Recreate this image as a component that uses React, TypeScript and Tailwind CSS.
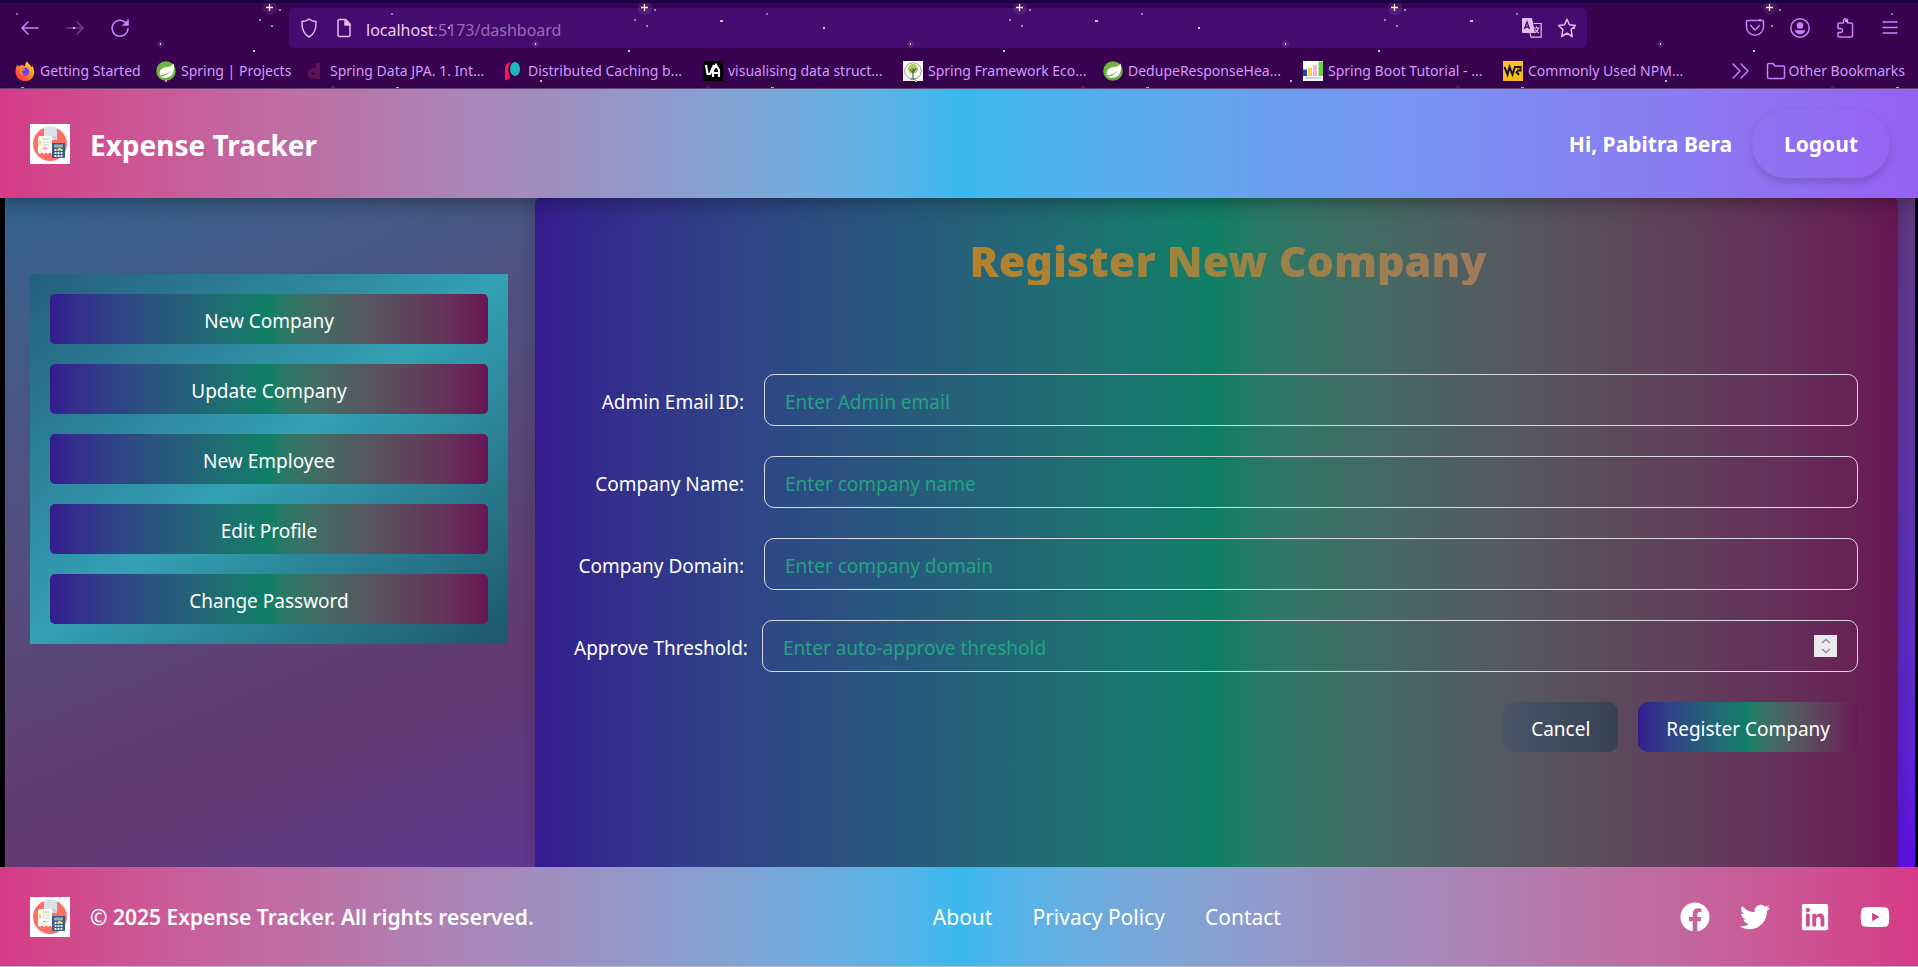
import React from "react";
import { FaFacebook, FaLinkedin, FaTwitter, FaYoutube } from "react-icons/fa";

const JEWEL =
  "bg-linear-to-r from-[#351b90] via-[#0f7f66] to-[#681555]";

function Stars() {
  return (
    <svg className="pointer-events-none absolute inset-0 z-10 h-full w-full" aria-hidden="true">
      <defs>
        <pattern id="stars" y="-3" width="375" height="90" patternUnits="userSpaceOnUse">
          <g fill="#d9b6c4">
            <rect x="16" y="13" width="2" height="2" opacity=".6" />
            <rect x="259" y="19" width="2" height="2" opacity=".7" />
            <rect x="279" y="9" width="2" height="2" opacity=".7" />
            <rect x="271" y="25" width="2" height="2" opacity=".7" />
            <rect x="253" y="50" width="2" height="2" />
            <rect x="73" y="27" width="2" height="2" />
            <rect x="345" y="20" width="3" height="2" />
            <rect x="165" y="80" width="2" height="2" />
            <rect x="21" y="87" width="3" height="2" />
            <rect x="160" y="43" width="1" height="2" />
          </g>
          <circle cx="270" cy="8" r="7" fill="#fff" opacity=".08" />
          <path d="M269.500 4v7M266 7.500h7" stroke="#ffe9c9" strokeWidth="1.300" />
          <path d="M160.500 40l4 4-4 4-4-4z" fill="#fff" opacity=".12" />
          <path d="M333 85l4 4h-8z" fill="#fff" opacity=".12" />
        </pattern>
      </defs>
      <rect width="100%" height="100%" fill="url(#stars)" />
    </svg>
  );
}

function Glyph({ children, className = "text-[#cf80ff]" }: { children: React.ReactNode; className?: string }) {
  return (
    <svg
      viewBox="0 0 20 20"
      className={`size-5 shrink-0 ${className}`}
      fill="none"
      stroke="currentColor"
      strokeWidth="1.5"
      strokeLinecap="round"
      strokeLinejoin="round"
      aria-hidden="true"
    >
      {children}
    </svg>
  );
}

function SpringLeaf() {
  return (
    <svg viewBox="0 0 20 20" className="size-5 shrink-0" aria-hidden="true">
      <circle cx="10" cy="10" r="9.800" fill="#6db33f" />
      <path d="M17.500 2.500c1.500 5 .5 12.500-6 14-3 .7-6 0-7.500-.8 4-.4 8-2 10.500-6-3 3-6.500 4.200-10.500 4.800C2.500 9.500 6 6.500 11 6c3-.3 5-1 6.500-3.500z" fill="#fff" />
    </svg>
  );
}

const favicons: Record<string, React.ReactNode> = {
  firefox: (
    <svg viewBox="0 0 20 20" className="size-5 shrink-0" aria-hidden="true">
      <defs>
        <linearGradient id="fox" x1="1" y1="0" x2="0.2" y2="1">
          <stop offset="0" stopColor="#fff14a" />
          <stop offset=".45" stopColor="#ff9a1f" />
          <stop offset="1" stopColor="#ff2a5a" />
        </linearGradient>
      </defs>
      <path d="M12 .5c1 2 3 3 4.500 5.500l1-1c2 4 2.500 8 .2 11.300A9.500 9.500 0 0 1 .8 13C0 9.500.8 6 2.600 3.800L4 5.500 6.500 4C8 4 9 5 10 5.200 10 3 10.800 1.500 12 .5z" fill="url(#fox)" />
      <circle cx="10" cy="10.800" r="4.300" fill="#7542e5" />
      <path d="M4.500 7c2.500-.5 4 .3 5.500 1.500-1 .8-2 .8-3 1.500-.5 2 1 3.500 3 3.500-3 1.500-6-1-5.500-6.500z" fill="#ff8a1c" />
    </svg>
  ),
  spring: <SpringLeaf />,
  d: (
    <svg viewBox="0 0 20 20" className="size-5 shrink-0" aria-hidden="true">
      <path d="M13 2v16M12.500 12.500a4 3.500 0 1 1-8 0 4 3.500 0 0 1 8 0z" stroke="#5b1458" strokeWidth="4" fill="none" />
    </svg>
  ),
  p: (
    <svg viewBox="0 0 20 20" className="size-5 shrink-0" aria-hidden="true">
      <path d="M8 1C4 1.500 2 4 2 8v11c3 0 5-1 5-4C4.500 12 5 4 8 1z" fill="#ff1654" />
      <ellipse cx="12" cy="8" rx="5" ry="7" fill="#1fb5c4" />
    </svg>
  ),
  va: (
    <svg viewBox="0 0 20 20" className="size-5 shrink-0" aria-hidden="true">
      <path d="M0 0h20v20H0z" />
      <path d="M3 4l1.500 9H7L11 4M10 16V9l3-5 3 5v7M10 12h6" stroke="#fff" strokeWidth="2.200" fill="none" />
    </svg>
  ),
  tree: (
    <svg viewBox="0 0 20 20" className="size-5 shrink-0" aria-hidden="true">
      <path d="M0 0h20v20H0z" fill="#fff" />
      <circle cx="10" cy="10" r="8.300" fill="none" stroke="#9aa0a0" />
      <circle cx="10" cy="8" r="5" fill="#b9cc4f" />
      <path d="M10 7v11M10 12L7 8M10 11l3-3.500M7.500 18h5" stroke="#566" strokeWidth="1.200" />
    </svg>
  ),
  chart: (
    <svg viewBox="0 0 20 20" className="size-5 shrink-0" aria-hidden="true">
      <path d="M0 0h20v20H0z" fill="#fff" />
      <path d="M0 8.500h4V15H0z" fill="#1b4fb5" />
      <path d="M5 6.500h4V15H5z" fill="#ffd54a" />
      <path d="M10 4h4v11h-4z" fill="#ffb3e0" />
      <path d="M15.500.5H20V15h-4.500z" fill="#6bd13f" />
      <path d="M2 17h16" stroke="#aab6dd" />
    </svg>
  ),
  wp: (
    <svg viewBox="0 0 20 20" className="size-5 shrink-0" aria-hidden="true">
      <path d="M0 0h20v20H0z" fill="#fdbf1f" />
      <path d="M1.500 6l3 7.500L6.500 6l3 7.500L11.500 7M11 6h6.500v3.500H14M13 10.500l3 3.500" stroke="#111" strokeWidth="2" fill="none" />
    </svg>
  ),
};

const bookmarks = [
  { icon: "firefox", label: "Getting Started", width: "w-[141px]" },
  { icon: "spring", label: "Spring | Projects", width: "w-[149px]" },
  { icon: "d", label: "Spring Data JPA. 1. Int...", width: "w-[198px]" },
  { icon: "p", label: "Distributed Caching b...", width: "w-[200px]" },
  { icon: "va", label: "visualising data struct...", width: "w-[200px]" },
  { icon: "tree", label: "Spring Framework Eco...", width: "w-[200px]" },
  { icon: "spring", label: "DedupeResponseHea...", width: "w-[200px]" },
  { icon: "chart", label: "Spring Boot Tutorial - ...", width: "w-[200px]" },
  { icon: "wp", label: "Commonly Used NPM...", width: "w-[200px]" },
];

function BrowserBar() {
  return (
    <div className="relative flex h-[89px] flex-col border-t-3 border-b border-t-[#1d0045] border-b-[#6d4a83] bg-[#380250]">
      <Stars />
      <div className="flex items-center pt-[5px] pr-[18px] pl-5">
        <div className="flex gap-[25px]">
          <button type="button" aria-label="Back"><Glyph><path d="M18 10H2M8 4l-6 6 6 6" /></Glyph></button>
          <button type="button" aria-label="Forward"><Glyph className="text-[#79359d]"><path d="M2 10h16M12 4l6 6-6 6" /></Glyph></button>
          <button type="button" aria-label="Reload">
            <Glyph><path d="M18 10.500a8 8 0 1 1-3-6.500L17 6" /><path d="M18.500 1.500v6h-6z" fill="currentColor" strokeWidth=".5" /></Glyph>
          </button>
        </div>
        <div className="mr-[158px] ml-[159px] flex h-10 flex-1 items-center rounded-[5px] bg-[#440c71] px-[10px]">
          <Glyph className="text-[#e6bdea]"><path d="M10 1c2 1.700 4.500 2.400 7 2.600.3 6.400-1 12.200-7 15.400C4 15.800 2.700 10 3 3.600 5.500 3.400 8 2.700 10 1z" /></Glyph>
          <Glyph className="ml-[15px] text-[#e6bdea]"><path d="M5 1.500h6.500L16 6v11a1.500 1.500 0 0 1-1.500 1.500h-9A1.500 1.500 0 0 1 4 17V3a1.500 1.500 0 0 1 1-1.500z" /><path d="M11 1.500V7h5z" fill="currentColor" /></Glyph>
          <p className="ml-3 flex-1 pt-[3px] text-base text-[#9c6bb2]"><span className="text-[#f0cdf5]">localhost</span>:5173/dashboard</p>
          <button type="button" aria-label="Translate page">
            <svg viewBox="0 0 20 20" className="size-5 text-[#e6bdea]" aria-hidden="true">
              <path d="M1 0h9l3 15H1a1 1 0 0 1-1-1V1a1 1 0 0 1 1-1z" fill="currentColor" />
              <path d="M2.500 11L5 4l2.500 7M3.500 9h3" stroke="#440c71" strokeWidth="1.400" fill="none" />
              <path d="M11.500 5.500h7.700v13.700H9l-1-4M11.500 10h6M14.500 8.500V10M16.500 10c-.5 2.500-2 4-4 5M13 11.500c1 1.500 2 2.500 4 3.500" stroke="currentColor" strokeWidth="1.200" fill="none" />
            </svg>
          </button>
          <button type="button" aria-label="Bookmark page" className="ml-[15px]">
            <Glyph className="text-[#e6bdea]"><path d="M10 1.300l2.500 5.500 6 .7-4.400 4.100 1.200 6.900-5.300-3.300-5.300 3.300 1.200-6.900L1.500 7.500l6-.7z" /></Glyph>
          </button>
        </div>
        <div className="flex gap-[25px]">
          <button type="button" aria-label="Pocket"><Glyph><path d="M2.500 2.500h15a1 1 0 0 1 1 1v5.300a8.500 8.500 0 0 1-17 0V3.500a1 1 0 0 1 1-1zM5.500 7.500L10 12l4.500-4.500" /></Glyph></button>
          <button type="button" aria-label="Account"><Glyph><circle cx="10" cy="10" r="9.200" /><circle cx="10" cy="7.500" r="2.500" fill="currentColor" /><path d="M5 12.500h10c-.8 2.200-2.500 3.500-5 3.500s-4.200-1.300-5-3.500z" fill="currentColor" strokeWidth=".5" /></Glyph></button>
          <button type="button" aria-label="Extensions"><Glyph><path d="M8.500 5V2.800a2 2 0 0 1 4 0V5h4a1 1 0 0 1 1 1v12a1 1 0 0 1-1 1H4a1 1 0 0 1-1-1v-3.500h2.500a2 2 0 0 0 0-4H3V6a1 1 0 0 1 1-1z" /></Glyph></button>
          <button type="button" aria-label="Menu"><Glyph><path d="M3 4h14M3 9.500h14M3 15h14" /></Glyph></button>
        </div>
      </div>
      <nav className="flex flex-1 items-center pt-[6px] pr-[13px] pl-[15px] text-sm text-[#d79bff]">
        {bookmarks.map((b) => (
          <a key={b.label} href="#" className={`flex shrink-0 items-center gap-[5px] whitespace-nowrap ${b.width}`}>
            {favicons[b.icon]}
            {b.label}
          </a>
        ))}
        <button type="button" aria-label="More bookmarks" className="ml-auto"><Glyph><path d="M3 3l7 7-7 7M11 3l7 7-7 7" /></Glyph></button>
        <a href="#" className="ml-4 flex items-center gap-[3px] whitespace-nowrap">
          <Glyph><path d="M1.500 16V4A1.500 1.500 0 0 1 3 2.500h4l2 2.500h8A1.500 1.500 0 0 1 18.500 6.500V16a1.500 1.500 0 0 1-1.500 1.500H3A1.500 1.500 0 0 1 1.500 16z" /></Glyph>
          Other Bookmarks
        </a>
      </nav>
    </div>
  );
}

function Logo() {
  return (
    <svg viewBox="0 0 40 40" className="size-10 shrink-0" role="img" aria-label="Expense Tracker logo">
      <path d="M0 0h40v40H0z" fill="#fff" />
      <circle cx="20" cy="20" r="17" fill="#fd6e65" />
      <path d="M14 3.500C18 2 24 2.200 27 4v12H14z" fill="#dde2ea" />
      <path d="M10 12h13c2 0 4 1 4 4h-5v14l-2-1.500-2 1.500-2-1.500-2 1.500-2-1.500L10 30l-2-1.500V14c0-1 1-2 2-2z" fill="#fdf8f3" />
      <path d="M22 12c3-1 5 1 5 4h-4z" fill="#c9cfda" />
      <path d="M12 15h7" stroke="#9fd89c" />
      <path d="M13 18h7M13 21h6" stroke="#cfd4dc" />
      <path d="M10 17v4" stroke="#ffd34f" strokeWidth="2" />
      <path d="M13 24.500h4" stroke="#f88" />
      <path d="M22 19h13v15H22z" fill="#3f5a80" />
      <path d="M24 20.500h9v3h-9z" fill="#8fb4bd" />
      <path d="M25.500 25v8M28.500 25v8M31.500 25v8" stroke="#e8eef5" strokeWidth="2" strokeDasharray="2 1" />
      <path d="M28 24h3v2h-3z" fill="#e5d44f" />
    </svg>
  );
}

const menu = ["New Company", "Update Company", "New Employee", "Edit Profile", "Change Password"];

const fields = [
  { id: "email", label: "Admin Email ID:", hint: "Enter Admin email", type: "email" },
  { id: "name", label: "Company Name:", hint: "Enter company name", type: "text" },
  { id: "domain", label: "Company Domain:", hint: "Enter company domain", type: "text" },
];

const FIELD =
  "h-13 w-full rounded-[10px] border border-[#d8d9e2] bg-transparent px-5 pt-1 text-white placeholder:text-[#22a282] outline-none";

export default function App() {
  return (
    <div className="flex min-h-screen flex-col bg-black font-['Noto_Sans',sans-serif] text-white">
      <BrowserBar />

      <header className="relative z-10 flex h-[109px] items-center justify-between bg-linear-to-r from-[#d63a85] via-[#39b9ee] to-[#9661f2] pr-7 pl-[30px] shadow-[0_4px_20px_rgba(0,0,0,0.35)]">
        <div className="flex items-center gap-5">
          <Logo />
          <h1 className="pt-0.5 text-[28px] font-bold">Expense Tracker</h1>
        </div>
        <div className="flex items-center gap-5 text-[21px] font-bold">
          <span className="pt-[3px]">Hi, Pabitra Bera</span>
          <button type="button" className="h-[68px] rounded-[34px] px-8 pt-[3px] shadow-[0_4px_8px_rgba(0,0,0,0.15)]">Logout</button>
        </div>
      </header>

      <main className="-mt-[109px] mr-[3px] ml-[5px] flex flex-1 bg-linear-to-br from-[#1a6993] via-[#633971] to-[#5f0ce8] pt-[109px] pr-[17px]">
        <aside className="w-[530px] px-[25px] pt-[76px] pr-[27px]">
          <nav className="flex flex-col gap-5 bg-linear-to-br from-[#245f7d] via-[#34a1b4] to-[#1e586c] p-5">
            {menu.map((m) => (
              <button key={m} type="button" className={`h-[50px] rounded-[5px] pt-1 text-[19px] ${JEWEL}`}>
                {m}
              </button>
            ))}
          </nav>
        </aside>

        <section className={`flex-1 rounded-t-[5px] pt-[39px] pr-10 pl-[39px] shadow-[0_0_20px_rgba(0,0,0,0.2)] ${JEWEL}`}>
          <div className="flex justify-center pl-6">
            <h2 className="bg-linear-to-r from-[#b5812a] via-[#9a8442] to-[#a07a5c] bg-clip-text text-[43px] leading-[48px] font-black text-transparent">
              Register New Company
            </h2>
          </div>
          <form className="mt-[89px] flex flex-col gap-[30px] text-[19px]">
            {fields.map((f) => (
              <div key={f.id} className="flex items-center gap-5">
                <label htmlFor={f.id} className="w-[170px] shrink-0 pt-1 text-right">{f.label}</label>
                <input id={f.id} type={f.type} placeholder={f.hint} className={FIELD} />
              </div>
            ))}
            <div className="flex items-center gap-[15px]">
              <label htmlFor="threshold" className="w-[173px] shrink-0 pt-1 text-right whitespace-nowrap">Approve Threshold:</label>
              <div className="relative flex-1">
                <input
                  id="threshold"
                  type="number"
                  placeholder="Enter auto-approve threshold"
                  className={`[appearance:textfield] ${FIELD}`}
                />
                <span className="absolute top-[15px] right-[21px] flex h-[22px] w-[23px] items-center justify-center bg-[#e9e9ef]">
                  <svg viewBox="0 0 10 16" className="h-4 w-2.5" fill="none" stroke="#8f8f9d" strokeWidth="1.500" aria-hidden="true">
                    <path d="M1 5l4-3.500L9 5M1 11l4 3.500L9 11" />
                  </svg>
                </span>
              </div>
            </div>
            <div className="flex justify-end gap-5">
              <button type="button" className="h-[50px] rounded-[10px] bg-linear-to-r from-[#4a5568] to-[#364152] px-7 pt-1">Cancel</button>
              <button type="submit" className={`h-[50px] rounded-[10px] px-7 pt-1 ${JEWEL}`}>Register Company</button>
            </div>
          </form>
        </section>
      </main>

      <footer className="relative flex h-[100px] items-center justify-between border-b border-[#b4b8c6] bg-linear-to-r from-[#d63a85] via-[#39b9ee] to-[#d63a85] pr-7 pl-[30px] text-[21px]">
        <div className="flex items-center gap-5">
          <Logo />
          <p className="pt-[3px] font-semibold">© 2025 Expense Tracker. All rights reserved.</p>
        </div>
        <nav className="flex gap-10 pt-[3px]">
          <a href="#">About</a>
          <a href="#">Privacy Policy</a>
          <a href="#">Contact</a>
        </nav>
        <div className="flex gap-[30px]">
          <a href="#" aria-label="Facebook"><FaFacebook className="size-[30px]" /></a>
          <a href="#" aria-label="Twitter"><FaTwitter className="size-[30px]" /></a>
          <a href="#" aria-label="LinkedIn"><FaLinkedin className="size-[30px]" /></a>
          <a href="#" aria-label="YouTube"><FaYoutube className="size-[30px]" /></a>
        </div>
      </footer>
    </div>
  );
}
